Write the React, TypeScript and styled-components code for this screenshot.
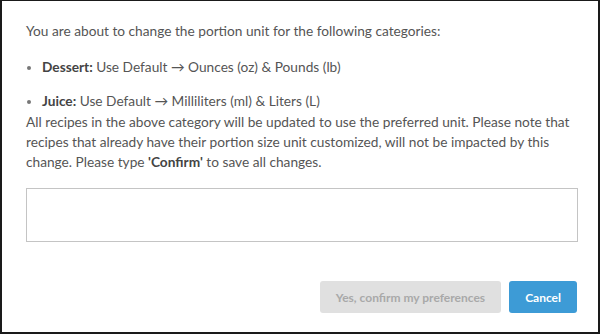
import React from "react";
import styled, { createGlobalStyle } from "styled-components";

const Global = createGlobalStyle`
  html, body { margin: 0; padding: 0; background: #fff; }
  * { box-sizing: border-box; }
`;

const Dialog = styled.div`
  width: 600px;
  height: 334px;
  background: #fff;
  border-style: solid;
  border-color: #1a1a1a;
  border-width: 1px 2px 2px 2px;
  padding: 20px 21px 19px 24px;
  display: flex;
  flex-direction: column;
  font-family: Lato, "Liberation Sans", sans-serif;
  font-size: 13.7px;
  line-height: 20px;
  color: #555;
`;

const Text = styled.p<{ $mb?: number }>`
  margin: 0 0 ${(p) => p.$mb ?? 0}px 0;
`;

const List = styled.ul`
  margin: 0 0 1px 0;
  padding-left: 16px;
  list-style: disc;
  li + li { margin-top: 14px; }
  li::marker { color: #777; font-size: 12px; }
`;

const Strong = styled.b`
  font-weight: 700;
  color: #444;
`;

const Input = styled.textarea`
  width: 552px;
  height: 54px;
  margin-top: 16px;
  border: 1px solid #c4c4c4;
  border-radius: 0;
  resize: none;
  outline: none;
  font-family: inherit;
`;

const Footer = styled.div`
  margin-top: auto;
  display: flex;
  justify-content: flex-end;
  gap: 8px;
`;

const Button = styled.button<{ $primary?: boolean }>`
  height: 32px;
  padding: 0 16px;
  border: none;
  border-radius: 3px;
  font-family: Lato, "Liberation Sans", sans-serif;
  font-size: 12px;
  font-weight: 700;
  background: ${(p) => (p.$primary ? "#3d9bd6" : "#e0e0e0")};
  color: ${(p) => (p.$primary ? "#fff" : "#a9a9a9")};
`;

export default function App() {
  return (
    <>
      <Global />
      <Dialog>
        <Text $mb={16}>You are about to change the portion unit for the following categories:</Text>
        <List>
          <li>
            <Strong>Dessert:</Strong> Use Default → Ounces (oz) &amp; Pounds (lb)
          </li>
          <li>
            <Strong>Juice:</Strong> Use Default → Milliliters (ml) &amp; Liters (L)
          </li>
        </List>
        <Text>
          All recipes in the above category will be updated to use the preferred unit. Please note that
          recipes that already have their portion size unit customized, will not be impacted by this
          change. Please type <Strong>'Confirm'</Strong> to save all changes.
        </Text>
        <Input />
        <Footer>
          <Button disabled>Yes, confirm my preferences</Button>
          <Button $primary>Cancel</Button>
        </Footer>
      </Dialog>
    </>
  );
}
